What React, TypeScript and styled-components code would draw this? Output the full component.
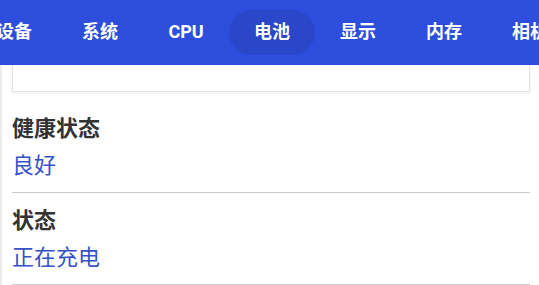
import React from "react";
import styled, { createGlobalStyle } from "styled-components";

const Global = createGlobalStyle`
  html, body { margin: 0; padding: 0; background: #ffffff; }
  body { font-family: "Noto Sans CJK SC", Roboto, sans-serif; }
`;

const Page = styled.div`
  width: 539px;
  height: 285px;
  overflow: hidden;
  display: flex;
  flex-direction: column;
  background: #ffffff;
`;

const Header = styled.header`
  flex: 0 0 65px;
  height: 65px;
  background: #2d4edc;
  display: flex;
  align-items: center;
  overflow: hidden;
  position: relative;
  z-index: 2;
`;

const TabStrip = styled.nav`
  display: flex;
  align-items: center;
  margin-left: -29px;
`;

const Tab = styled.div<{ $active?: boolean; $latin?: boolean }>`
  flex: 0 0 86px;
  height: 45px;
  border-radius: 23px;
  display: flex;
  align-items: center;
  justify-content: center;
  color: #ffffff;
  font-family: ${(p) =>
    p.$latin ? "Roboto, sans-serif" : '"Noto Sans CJK SC", sans-serif'};
  font-weight: 700;
  font-size: 18px;
  line-height: 22px;
  padding-bottom: ${(p) => (p.$latin ? "1px" : "6px")};
  box-sizing: border-box;
  background: ${(p) => (p.$active ? "#2a47c9" : "transparent")};
  white-space: nowrap;
`;

const Body = styled.main`
  flex: 1;
  display: flex;
  flex-direction: column;
  padding: 0 9px 0 10px;
  border-left: 2px solid #ececec;
`;

const Card = styled.section`
  flex: 0 0 26px;
  background: #ffffff;
  border: 1px solid #e3e3e3;
  border-top: none;
  box-shadow: 0 1px 3px rgba(0, 0, 0, 0.08);
  margin-bottom: 9px;
`;

const Item = styled.div`
  display: flex;
  flex-direction: column;
  gap: 9px;
  padding: 11px 0 15px;
  border-bottom: 1px solid #cccccc;
`;

const Label = styled.div`
  font-family: "Noto Sans CJK SC", sans-serif;
  font-size: 22px;
  line-height: 28px;
  font-weight: 700;
  color: #333333;
`;

const Value = styled.div`
  font-family: "Noto Sans CJK SC", sans-serif;
  font-size: 22px;
  line-height: 28px;
  font-weight: 400;
  color: #3552c8;
`;

const tabs = ["设备", "系统", "CPU", "电池", "显示", "内存", "相机"];

const items = [
  { label: "健康状态", value: "良好" },
  { label: "状态", value: "正在充电" },
];

export default function App() {
  return (
    <Page>
      <Global />
      <Header>
        <TabStrip>
          {tabs.map((t) => (
            <Tab key={t} $active={t === "电池"} $latin={/^[A-Za-z]+$/.test(t)}>
              {t}
            </Tab>
          ))}
        </TabStrip>
      </Header>
      <Body>
        <Card />
        {items.map((it) => (
          <Item key={it.label}>
            <Label>{it.label}</Label>
            <Value>{it.value}</Value>
          </Item>
        ))}
      </Body>
    </Page>
  );
}
